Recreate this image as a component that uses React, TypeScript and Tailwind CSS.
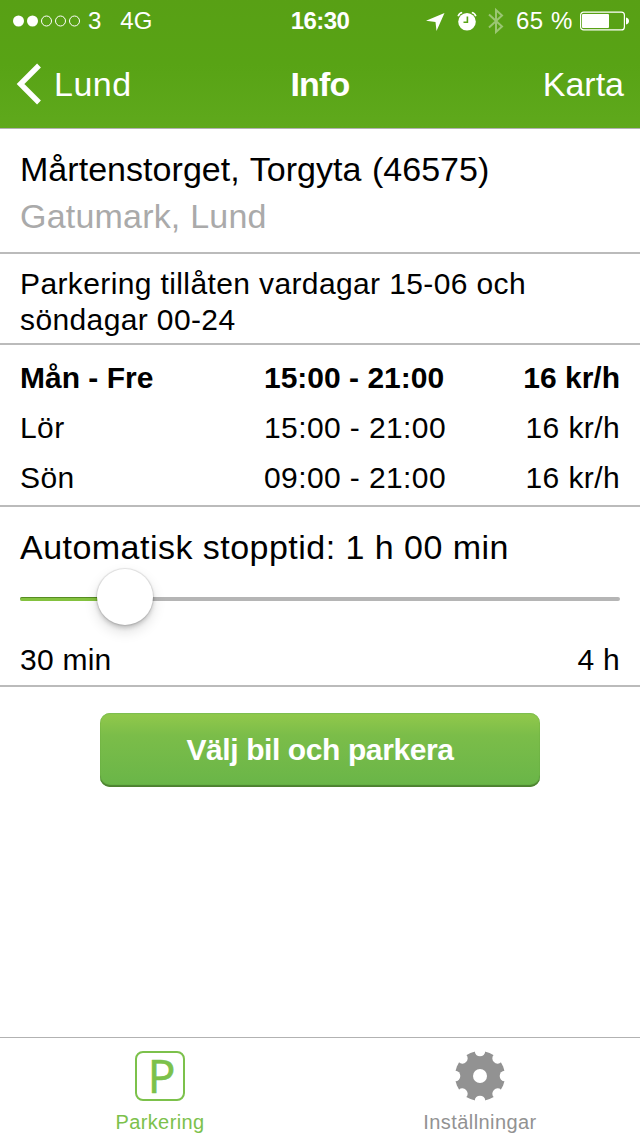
import type { ReactNode } from "react";

const prices = [
  { day: "Mån - Fre", hours: "15:00 - 21:00", price: "16 kr/h", active: true },
  { day: "Lör", hours: "15:00 - 21:00", price: "16 kr/h", active: false },
  { day: "Sön", hours: "09:00 - 21:00", price: "16 kr/h", active: false },
];

function StatusBar() {
  return (
    <div className="grid h-10 grid-cols-[220px_200px_220px] items-center pt-px text-[24px] leading-10 whitespace-nowrap">
      <div className="flex items-center pl-3">
        <svg width="70" height="12" viewBox="0 0 70 12" fill="none" stroke="#fff">
          <circle cx="6.5" cy="6" r="5.5" fill="#fff" stroke="none" />
          <circle cx="20.5" cy="6" r="5.5" fill="#fff" stroke="none" />
          <circle cx="34.5" cy="6" r="5" />
          <circle cx="48.5" cy="6" r="5" />
          <circle cx="62.5" cy="6" r="5" />
        </svg>
        <span className="ml-1.5">3</span>
        <span className="ml-[19px]">4G</span>
      </div>

      <div className="text-center font-bold tracking-[-0.6px]">16:30</div>

      <div className="flex items-center justify-end pr-[10px]">
        <svg width="19" height="19" viewBox="0 0 19 19" fill="#fff">
          <path d="M18.5 1 L10.5 19 L9.5 10 L0 8.7 Z" />
        </svg>
        <svg className="ml-3" width="20" height="20" viewBox="0 0 20 20" fill="none">
          <path d="M1.2 5.2A5 5 0 0 1 5.2 1.5M14.8 1.5a5 5 0 0 1 4 3.7" stroke="#fff" strokeWidth="1.7" />
          <circle cx="10" cy="10.7" r="8.8" fill="#fff" />
          <path d="M10.4 5.5v5.8H6.5" stroke="#58a315" strokeWidth="1.6" />
        </svg>
        <svg className="ml-[11px] opacity-40" width="16" height="28" viewBox="0 0 16 28" fill="none" stroke="#fff" strokeWidth="2">
          <path d="M1 7.5 L14 19.5 L8 25 V3 L14 8.5 L1 20.5" />
        </svg>
        <span className="ml-3 tracking-[0.6px]">65 %</span>
        <svg className="ml-[7px]" width="50" height="20" viewBox="0 0 50 20" fill="#fff">
          <rect x="0.6" y="1.1" width="43.8" height="17.8" rx="3" fill="none" stroke="#fff" strokeWidth="1.2" />
          <rect x="2" y="3" width="27" height="14" rx="1" />
          <path d="M46 6.5c2 .5 3 1.7 3 3.5s-1 3-3 3.5Z" />
        </svg>
      </div>
    </div>
  );
}

function NavBar() {
  return (
    <div className="grid h-[88px] grid-cols-3 items-center text-[34px] leading-[88px]">
      <div className="flex items-center pl-4">
        <svg width="26" height="42" viewBox="0 0 26 42" fill="none" stroke="#fff" strokeWidth="5.4">
          <path d="M23 2.5 L4.5 21 L23 39.5" />
        </svg>
        <span className="ml-3 tracking-[0.5px]">Lund</span>
      </div>
      <div className="text-center font-bold tracking-[-0.8px]">Info</div>
      <div className="pr-4 text-right">Karta</div>
    </div>
  );
}

function Section({ className, children }: { className: string; children: ReactNode }) {
  return (
    <section className={`border-b-2 border-[#bbbbbb] px-5 whitespace-nowrap ${className}`}>
      {children}
    </section>
  );
}

function StopTimeSlider() {
  return (
    <div className="relative mt-[26px] h-1 rounded-full bg-[#b5b5b5]">
      <div className="h-1 w-[105px] rounded-full border-t border-[#568c22] bg-[#84c23f]" />
      <div className="absolute -top-7 left-[77px] size-14 rounded-full bg-white shadow-[0_0_1px_1px_rgba(0,0,0,0.1),0_3px_4px_rgba(0,0,0,0.16),0_6px_14px_rgba(0,0,0,0.14)]" />
    </div>
  );
}

function GearIcon() {
  const notches = [0, 45, 90, 135, 180, 225, 270, 315];

  return (
    <svg width="50" height="50" viewBox="0 0 50 50">
      <circle cx="25" cy="25" r="25" fill="#929292" />
      {notches.map((angle) => (
        <ellipse
          key={angle}
          cx="25"
          cy="0.5"
          rx="5.2"
          ry="4.8"
          fill="#fff"
          transform={`rotate(${angle} 25 25)`}
        />
      ))}
      <circle cx="25" cy="25" r="7" fill="#fff" />
    </svg>
  );
}

function TabBar() {
  return (
    <nav className="grid h-[99px] grid-cols-2 border-t border-[#b2b2b2] text-[20px] leading-6">
      <div className="flex flex-col items-center pt-[13px] text-[#7cc14b]">
        <div className="flex size-[50px] justify-center rounded-[8px] border-2 border-current pl-[3px] font-['Open_Sans',sans-serif] text-[46px] leading-[44px] [-webkit-text-stroke:0.7px_currentColor]">
          P
        </div>
        <span className="mt-[9px] tracking-[0.4px]">Parkering</span>
      </div>
      <div className="flex flex-col items-center pt-[13px] text-[#929292]">
        <GearIcon />
        <span className="mt-[9px] tracking-[0.42px]">Inställningar</span>
      </div>
    </nav>
  );
}

export default function App() {
  return (
    <div className="flex h-[1136px] w-[640px] flex-col bg-white font-['Liberation_Sans',Arial,sans-serif] text-black">
      <header className="h-[129px] border-b border-[#b2b2b2] bg-linear-to-b from-[#58a015] via-[#58a315] to-[#5fa91c] text-white">
        <StatusBar />
        <NavBar />
      </header>

      <main className="flex-1">
        <Section className="h-[125px] pt-[17px] text-[34px] leading-[47px]">
          <h1 className="tracking-[0.04px] [word-spacing:1px]">Mårtenstorget, Torgyta (46575)</h1>
          <p className="tracking-[0.2px] text-[#aaaaaa]">Gatumark, Lund</p>
        </Section>

        <Section className="h-[91px] pt-3 text-[30px] leading-9">
          <p className="tracking-[0.38px]">
            Parkering tillåten vardagar 15-06 och
            <br />
            söndagar 00-24
          </p>
        </Section>

        <Section className="h-[162px] pt-2 text-[30px] leading-[50px]">
          {prices.map((row) => (
            <div
              key={row.day}
              className={`grid grid-cols-[244px_1fr_auto] ${row.active ? "font-bold" : "tracking-[0.4px]"}`}
            >
              <span>{row.day}</span>
              <span>{row.hours}</span>
              <span>{row.price}</span>
            </div>
          ))}
        </Section>

        <Section className="h-[180px] pt-[17px] text-[30px] leading-9">
          <h2 className="text-[34px] leading-[47px] tracking-[0.47px]">
            Automatisk stopptid: 1 h 00 min
          </h2>
          <StopTimeSlider />
          <div className="mt-[41px] flex justify-between tracking-[0.25px]">
            <span>30 min</span>
            <span>4 h</span>
          </div>
        </Section>

        <button className="mx-auto mt-[26px] block h-[74px] w-[440px] rounded-[10px] bg-linear-to-b from-[#92c94b] via-[#7bbd49] via-30% to-[#69b548] pb-0.5 text-[30px] font-bold tracking-[-0.4px] text-white shadow-[inset_0_-2px_1px_#4d8130,inset_0_1px_1px_#7dbd50]">
          Välj bil och parkera
        </button>
      </main>

      <TabBar />
    </div>
  );
}
